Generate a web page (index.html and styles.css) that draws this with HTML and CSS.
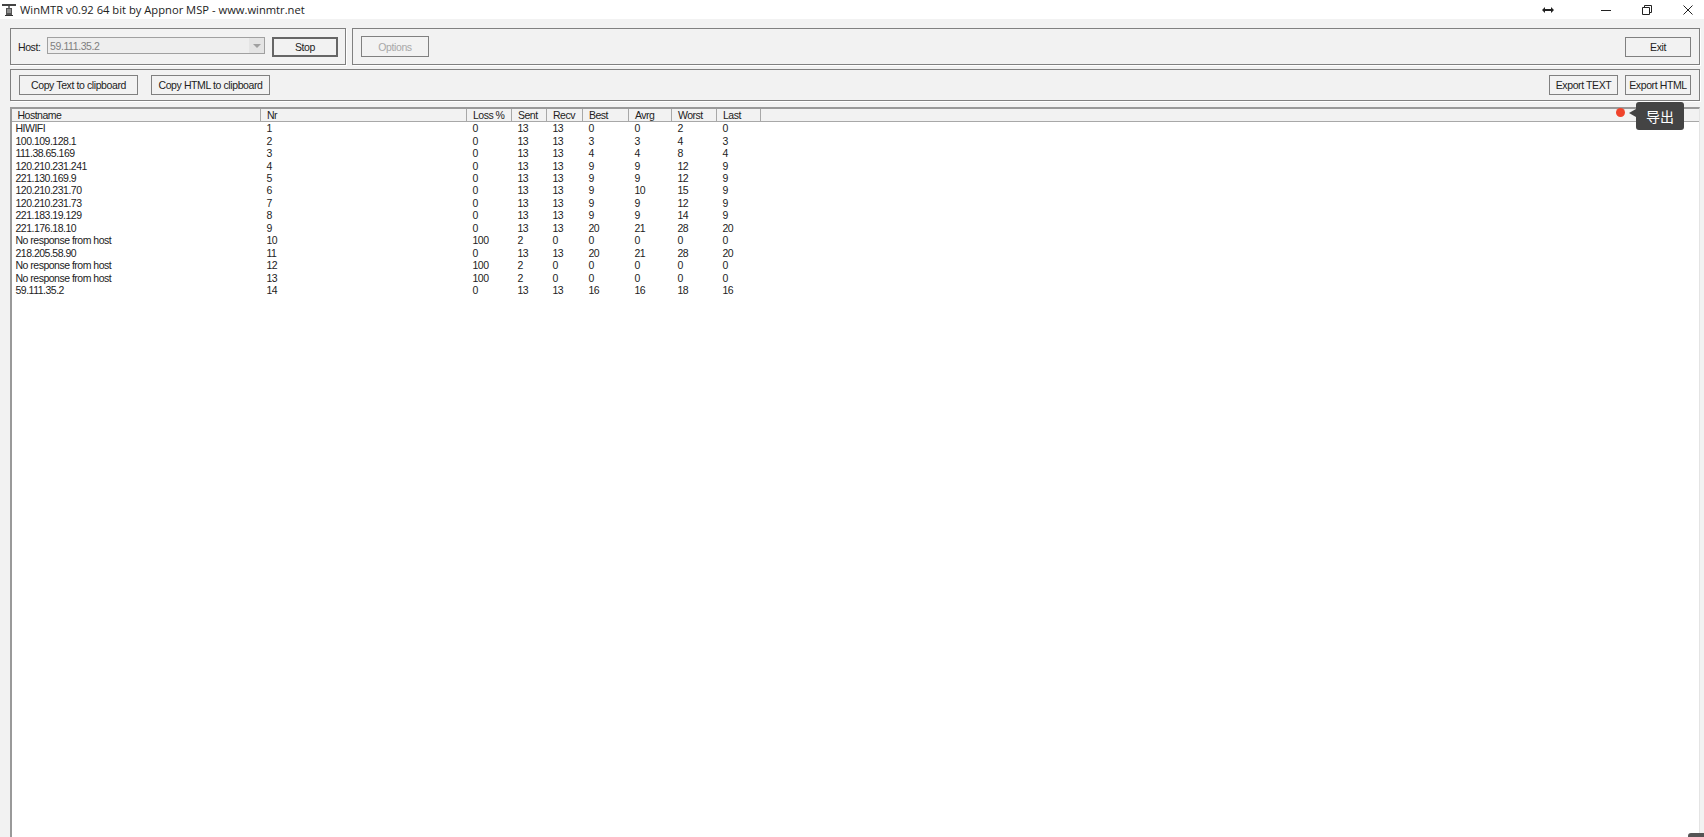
FILE: index.html
```html
<!DOCTYPE html>
<html lang="en">
<head>
    <meta charset="UTF-8">
    <meta name="viewport" content="width=device-width, initial-scale=1.0">
    <title>WinMTR</title>
    <link rel="stylesheet" href="styles.css">
</head>
<body>
    <!-- Title bar -->
    <div class="titlebar">
        <svg class="app-icon" width="14" height="14" viewBox="0 0 14 14">
            <path d="M0 1h14v2H0z" fill="#444"/>
            <path d="M6 3h2v2H6z" fill="#777"/>
            <path d="M4 5h6v7H4z" fill="#555"/>
            <path d="M5 7h4M5 9h4" stroke="#ccc" stroke-width="1"/>
            <path d="M3 12h8v1H3z" fill="#333"/>
        </svg>
        <span class="title-text">WinMTR v0.92 64 bit by Appnor MSP - www.winmtr.net</span>
        <svg class="resize-icon" width="12" height="8" viewBox="0 0 12 8">
            <path d="M0 4l3-3v2h6V1l3 3-3 3V5H3v2z" fill="#222"/>
        </svg>
        <div class="win-controls">
            <svg width="10" height="10" viewBox="0 0 10 10"><path d="M0 5.5h10" stroke="#222"/></svg>
            <svg width="10" height="10" viewBox="0 0 10 10"><path d="M.5 2.5h7v7h-7zM2.5 2.5v-2h7v7h-2" fill="none" stroke="#222"/></svg>
            <svg width="10" height="10" viewBox="0 0 10 10"><path d="M.5.5l9 9M9.5.5l-9 9" stroke="#222"/></svg>
        </div>
    </div>

    <div class="client">
        <div class="toolbar-row">
            <div class="group host-group">
                <label class="host-label">Host:</label>
                <div class="combo">
                    <span>59.111.35.2</span>
                    <span class="combo-arrow"></span>
                </div>
                <button class="btn btn-stop">Stop</button>
            </div>
            <div class="group options-group">
                <button class="btn btn-options" disabled>Options</button>
                <button class="btn btn-exit">Exit</button>
            </div>
        </div>

        <div class="group copy-group">
            <button class="btn btn-copy">Copy Text to clipboard</button>
            <button class="btn btn-copy">Copy HTML to clipboard</button>
            <button class="btn btn-text">Export TEXT</button>
            <button class="btn btn-html">Export HTML</button>
        </div>

        <div class="list-wrap">
            <table class="list">
                <colgroup>
                    <col class="c-host"><col class="c-nr"><col class="c-loss"><col class="c-sent"><col class="c-recv">
                    <col class="c-best"><col class="c-avrg"><col class="c-worst"><col class="c-last"><col>
                </colgroup>
                <thead>
                    <tr>
                        <th class="first">Hostname</th><th>Nr</th><th>Loss %</th><th>Sent</th><th>Recv</th>
                        <th>Best</th><th>Avrg</th><th>Worst</th><th>Last</th><th class="filler"></th>
                    </tr>
                </thead>
                <tbody>
                    <tr><td>HIWIFI</td><td>1</td><td>0</td><td>13</td><td>13</td><td>0</td><td>0</td><td>2</td><td>0</td><td></td></tr>
                    <tr><td>100.109.128.1</td><td>2</td><td>0</td><td>13</td><td>13</td><td>3</td><td>3</td><td>4</td><td>3</td><td></td></tr>
                    <tr><td>111.38.65.169</td><td>3</td><td>0</td><td>13</td><td>13</td><td>4</td><td>4</td><td>8</td><td>4</td><td></td></tr>
                    <tr><td>120.210.231.241</td><td>4</td><td>0</td><td>13</td><td>13</td><td>9</td><td>9</td><td>12</td><td>9</td><td></td></tr>
                    <tr><td>221.130.169.9</td><td>5</td><td>0</td><td>13</td><td>13</td><td>9</td><td>9</td><td>12</td><td>9</td><td></td></tr>
                    <tr><td>120.210.231.70</td><td>6</td><td>0</td><td>13</td><td>13</td><td>9</td><td>10</td><td>15</td><td>9</td><td></td></tr>
                    <tr><td>120.210.231.73</td><td>7</td><td>0</td><td>13</td><td>13</td><td>9</td><td>9</td><td>12</td><td>9</td><td></td></tr>
                    <tr><td>221.183.19.129</td><td>8</td><td>0</td><td>13</td><td>13</td><td>9</td><td>9</td><td>14</td><td>9</td><td></td></tr>
                    <tr><td>221.176.18.10</td><td>9</td><td>0</td><td>13</td><td>13</td><td>20</td><td>21</td><td>28</td><td>20</td><td></td></tr>
                    <tr><td>No response from host</td><td>10</td><td>100</td><td>2</td><td>0</td><td>0</td><td>0</td><td>0</td><td>0</td><td></td></tr>
                    <tr><td>218.205.58.90</td><td>11</td><td>0</td><td>13</td><td>13</td><td>20</td><td>21</td><td>28</td><td>20</td><td></td></tr>
                    <tr><td>No response from host</td><td>12</td><td>100</td><td>2</td><td>0</td><td>0</td><td>0</td><td>0</td><td>0</td><td></td></tr>
                    <tr><td>No response from host</td><td>13</td><td>100</td><td>2</td><td>0</td><td>0</td><td>0</td><td>0</td><td>0</td><td></td></tr>
                    <tr><td>59.111.35.2</td><td>14</td><td>0</td><td>13</td><td>13</td><td>16</td><td>16</td><td>18</td><td>16</td><td></td></tr>
                </tbody>
            </table>
        </div>
    </div>

    <!-- Overlay from the screenshot tool -->
    <span class="rec-dot"></span>
    <div class="tooltip">导出</div>
    <span class="corner"></span>
</body>
</html>
```

FILE: styles.css
```css
html, body {
    height: 100%;
}
body {
    margin: 0;
    background-color: #fff;
    color: #222;
    font-family: "Liberation Sans", Arial, sans-serif;
    font-size: 10.5px;
    letter-spacing: -0.4px;
    overflow: hidden;
    display: flex;
    flex-direction: column;
}

/* Title bar */
.titlebar {
    height: 19px;
    flex: none;
    display: flex;
    align-items: center;
    background-color: #fff;
    letter-spacing: 0;
}
.app-icon {
    margin-left: 2px;
    margin-right: 4px;
}
.title-text {
    font-family: "Open Sans", sans-serif;
    font-size: 11.2px;
    color: #222;
}
.resize-icon {
    margin-left: auto;
    margin-right: 47px;
}
.win-controls {
    display: flex;
    gap: 31px;
    margin-right: 11px;
}

/* Dialog area */
.client {
    flex: 1;
    min-height: 0;
    display: flex;
    flex-direction: column;
    background-color: #f2f2f2;
    padding: 9px 4px 0 10px;
}
.toolbar-row {
    display: flex;
    gap: 6px;
    margin-bottom: 4px;
}
.group {
    box-sizing: border-box;
    border: 1px solid #808080;
    box-shadow: 1px 1px 0 #fff;
    display: flex;
    align-items: center;
}
.host-group {
    width: 336px;
    height: 37px;
    padding-left: 7px;
}
.options-group {
    flex: 1;
    height: 37px;
    padding: 0 8px;
    justify-content: space-between;
}
.copy-group {
    height: 32px;
    gap: 13px;
    padding: 0 8px;
    flex: none;
}
.host-label {
    width: 29px;
}
.combo {
    box-sizing: border-box;
    width: 218px;
    height: 17px;
    margin-bottom: 2px;
    display: flex;
    align-items: center;
    justify-content: space-between;
    border: 1px solid #a0a0a0;
    padding-left: 2px;
    color: #808080;
    background-color: #eee;
}
.combo-arrow {
    width: 15px;
    height: 15px;
    background-color: #e4e4e4;
    position: relative;
}
.combo-arrow::after {
    content: "";
    position: absolute;
    left: 4px;
    top: 6px;
    border-left: 4px solid transparent;
    border-right: 4px solid transparent;
    border-top: 4px solid #a0a0a0;
}

/* Buttons */
.btn {
    box-sizing: border-box;
    height: 20px;
    padding: 0;
    font-family: inherit;
    font-size: inherit;
    letter-spacing: inherit;
    color: #222;
    background-color: #f2f2f2;
    border: 1px solid #808080;
    white-space: nowrap;
}
.btn-stop {
    width: 66px;
    margin-left: 7px;
    border: 2px solid #666;
}
.btn-options {
    width: 68px;
    height: 21px;
    color: #a8a8a8;
}
.btn-exit {
    width: 66px;
}
.btn-copy {
    width: 119px;
}
.btn-text {
    width: 69px;
    margin-left: auto;
}
.btn-html {
    width: 66px;
    margin-left: -6px;
}

/* Result list */
.list-wrap {
    flex: 1;
    min-height: 0;
    margin-top: 6px;
    background-color: #fff;
    border-left: 2px solid #999;
    border-top: 2px solid #999;
    border-right: 1px solid #e4e4e4;
}
.list {
    width: 100%;
    table-layout: fixed;
    border-collapse: collapse;
    line-height: 12px;
    letter-spacing: -0.5px;
}
.c-host { width: 248px; }
.c-nr { width: 206px; }
.c-loss { width: 45px; }
.c-sent { width: 35px; }
.c-recv { width: 36px; }
.c-best { width: 46px; }
.c-avrg { width: 43px; }
.c-worst { width: 45px; }
.c-last { width: 44px; }
.list th {
    height: 12px;
    padding: 0 0 0 6.5px;
    font-weight: normal;
    text-align: left;
    white-space: nowrap;
    background-color: #f2f2f2;
    border-right: 1px solid #a8a8a8;
    border-bottom: 1px solid #a8a8a8;
}
.list th.first {
    padding-left: 5.5px;
}
.list th.filler {
    border-right: none;
}
.list td {
    height: 12.46px;
    padding: 0 0 0 6.5px;
    white-space: nowrap;
}
.list td:first-child {
    padding-left: 3.5px;
}

/* Overlay */
.rec-dot {
    position: absolute;
    left: 1616px;
    top: 108px;
    width: 9px;
    height: 9px;
    border-radius: 50%;
    background-color: #f0442c;
}
.tooltip {
    position: absolute;
    left: 1636px;
    top: 102px;
    width: 48px;
    height: 28px;
    border-radius: 3px;
    background-color: #444;
    color: #fff;
    font-family: "Noto Sans CJK SC", sans-serif;
    font-size: 14px;
    letter-spacing: 0;
    line-height: 28px;
    text-align: center;
}
.tooltip::before {
    content: "";
    position: absolute;
    left: -7px;
    top: 7px;
    border-top: 4px solid transparent;
    border-bottom: 4px solid transparent;
    border-right: 7px solid #444;
}
.corner {
    position: absolute;
    right: 0;
    bottom: 0;
    width: 16px;
    height: 4px;
    border-radius: 3px 0 0 0;
    background-color: #555;
}
```
